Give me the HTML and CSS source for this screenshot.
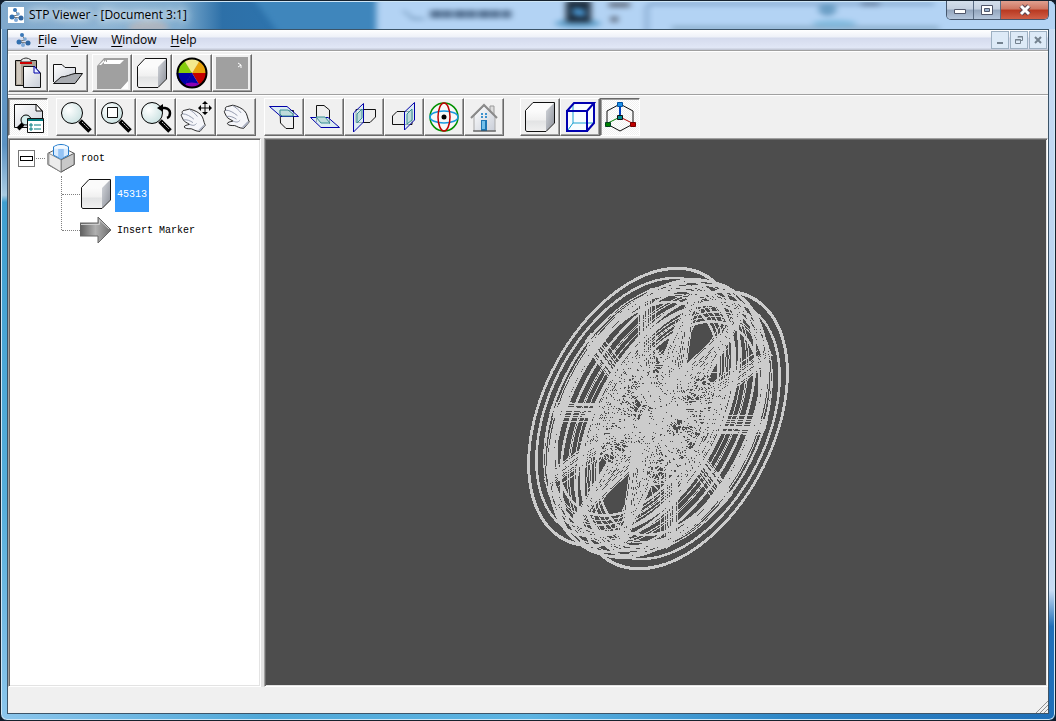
FILE: index.html
```html
<!DOCTYPE html>
<html lang="en">
<head>
    <meta charset="UTF-8">
    <meta name="viewport" content="width=device-width, initial-scale=1.0">
    <title>STP Viewer</title>
    <link rel="stylesheet" href="styles.css">
</head>
<body>
    <!-- shared shapes -->
    <svg class="defs" aria-hidden="true">
        <defs>
            <linearGradient id="side" x1="0" y1="0" x2="1" y2="1">
                <stop offset="0" stop-color="#d5d8dd"/>
                <stop offset="1" stop-color="#8c9099"/>
            </linearGradient>
            <linearGradient id="face" x1="0" y1="0" x2="0" y2="1">
                <stop offset="0" stop-color="#fbfbfb"/>
                <stop offset="0.45" stop-color="#f0f0f0"/>
                <stop offset="0.5" stop-color="#e2e3e4"/>
                <stop offset="1" stop-color="#f0f0f0"/>
            </linearGradient>
            <linearGradient id="paper" x1="0" y1="0" x2="1" y2="1">
                <stop offset="0" stop-color="#ffffff"/>
                <stop offset="1" stop-color="#c9ced8"/>
            </linearGradient>
            <radialGradient id="glass" cx="0.35" cy="0.35" r="0.8">
                <stop offset="0" stop-color="#ffffff"/>
                <stop offset="1" stop-color="#c4dede"/>
            </radialGradient>
            <linearGradient id="steel" x1="0" y1="0" x2="1" y2="0">
                <stop offset="0" stop-color="#5e5e5e"/>
                <stop offset="0.5" stop-color="#b0b0b0"/>
                <stop offset="1" stop-color="#6c6c6c"/>
            </linearGradient>
            <symbol id="cube" viewBox="0 0 32 32">
                <path d="M1.500 10 9 1.500H30.500V22L22 30.500H2.500L1.500 29Z" fill="#fbfbfb"/>
                <path d="M2 10H22V30H2Z" fill="url(#face)"/>
                <path d="M22 10 30 2V22L22 30Z" fill="url(#side)"/>
                <path d="M1.500 9.500 9 1.500H30.500V22L22 30.500H2.500L1.500 29Z" fill="none" stroke="#111"/>
            </symbol>
            <symbol id="lens" viewBox="0 0 32 32">
                <path d="M20 20 30 30" stroke="#000" stroke-width="5"/>
                <path d="M22 21 29 28" stroke="#c8c8c8" stroke-width="1" stroke-dasharray="2 1"/>
                <circle cx="12" cy="12" r="10.500" fill="url(#glass)" stroke="#000"/>
            </symbol>
            <symbol id="hand" viewBox="0 0 32 32">
                <path d="M6 5 12 3.500C18 5 22 7 25 10C28 13 28 18 30 22L24 29C19 29 17 27 14 26C10 26 7 26 6 24C6 22 9 22 12 21C9 19 6 18 5 16L3 12C2 10 3 9 4 9C3 7 4 5 6 5Z" fill="#f5f6fa" stroke="#111"/>
                <path d="M4 9C9 9 13 12 17 15M5 16C9 15 13 17 16 19M12 4C15 6 19 9 21 12M12 21C17 23 18 22 20 20" fill="none" stroke="#8c93a8"/>
                <path d="M23 28 29 22" stroke="#a9afc0" stroke-width="2"/>
            </symbol>
            <symbol id="atoms" viewBox="0 0 16 16">
                <path d="M7 3 10 8 5 9 9 13M4 10 12 11" fill="none" stroke="#777"/>
                <circle cx="7" cy="3" r="2" fill="#3a78b8"/>
                <circle cx="10" cy="7" r="1.800" fill="#7aa7d4"/>
                <circle cx="4" cy="10" r="2.500" fill="#3270b0"/>
                <circle cx="13" cy="11" r="2.500" fill="#2f65a0"/>
                <circle cx="8" cy="13" r="2" fill="#7fa9d8"/>
            </symbol>
        </defs>
    </svg>

    <div class="window">
        <header class="titlebar">
            <svg class="glass" viewBox="0 0 1056 29" preserveAspectRatio="none" aria-hidden="true">
                <g class="soft">
                    <path d="M250 -8H378V36H280Z" fill="#3f86bc"/>
                    <path d="M376 -8H1070V38H376Z" fill="#b3d3f4"/>
                    <ellipse cx="148" cy="28" rx="20" ry="9" fill="#c7b8b4" opacity="0.6"/>
                    <path d="M403 9 413 18M411 18H424" stroke="#7295b8" stroke-width="2"/>
                    <path d="M430 13H511" stroke="#334f70" stroke-width="9" stroke-dasharray="12 1 9 2" opacity="0.75"/>
                    <ellipse cx="578" cy="23" rx="23" ry="5" fill="#68a5cf"/>
                    <path d="M566 -2H591V22H566Z" fill="#1d2d3e"/>
                    <path d="M573 6 585 8V16L573 14Z" fill="#4791ca"/>
                    <path d="M609 0H630V6H609ZM611 15H618V22H611Z" fill="#667488"/>
                    <path d="M647 34V8Q647 2 653 2H935" fill="none" stroke="#7b9fc6" stroke-width="3"/>
                    <path d="M672 28H940" stroke="#86a8c4" stroke-width="4"/>
                    <ellipse cx="828" cy="8" rx="9" ry="7" fill="#6c9fc6"/>
                    <ellipse cx="835" cy="23" rx="22" ry="4" fill="#83bbdf"/>
                    <path d="M862 2H880" stroke="#50698c" stroke-width="5" opacity="0.7"/>
                </g>
            </svg>
            <svg class="app-icon" aria-hidden="true"><use href="#atoms"/></svg>
            <h1 class="title">STP Viewer - [Document 3:1]</h1>
            <div class="caption">
                <button class="cap min" aria-label="Minimize">
                    <svg width="16" height="12" viewBox="0 0 16 12"><path d="M2.500 5.500H13.500V9.500H2.500Z" fill="#fff" stroke="#50566a"/></svg>
                </button>
                <button class="cap max" aria-label="Maximize">
                    <svg width="14" height="12" viewBox="0 0 14 12"><path d="M1.500 1.500H12.500V10.500H1.500Z" fill="#fff" stroke="#50566a"/><path d="M4.500 4.500H9.500V7.500H4.500Z" fill="#9db4cf" stroke="#50566a"/></svg>
                </button>
                <button class="cap close" aria-label="Close">
                    <svg width="14" height="12" viewBox="0 0 14 12"><path d="M3 2 11 10M11 2 3 10" stroke="#5a4550" stroke-width="5"/><path d="M3 2 11 10M11 2 3 10" stroke="#fff" stroke-width="3"/></svg>
                </button>
            </div>
        </header>

        <div class="client">
            <nav class="menubar">
                <svg class="doc-icon" aria-hidden="true"><use href="#atoms"/></svg>
                <button class="menu"><u>F</u>ile</button>
                <button class="menu"><u>V</u>iew</button>
                <button class="menu"><u>W</u>indow</button>
                <button class="menu"><u>H</u>elp</button>
                <div class="mdi">
                    <button aria-label="Minimize document"><svg width="12" height="12"><path d="M3 9H9" stroke="#74828f" stroke-width="2"/></svg></button>
                    <button aria-label="Restore document"><svg width="12" height="12"><path d="M2.500 5.500H7.500V9.500H2.500ZM2 6H8M5 3.500V2.500H9.500V6.500H8M5 3H10" fill="none" stroke="#74828f"/></svg></button>
                    <button aria-label="Close document"><svg width="12" height="12"><path d="M3 3 9 9M9 3 3 9" stroke="#74828f" stroke-width="2"/></svg></button>
                </div>
            </nav>

            <div class="toolbar">
                <div class="group">
                    <button class="tool" aria-label="Paste">
                        <svg viewBox="0 0 32 32"><path d="M3.500 3.500H24.500V28.500H3.500Z" fill="#aaa195" stroke="#111"/><path d="M5 5H9V27H5Z" fill="#cfc8be"/><path d="M9 5V3Q14-1 19 3V5Z" fill="#e8e8e8" stroke="#333"/><path d="M8 6H20" stroke="#c00" stroke-width="2"/><path d="M11.500 9.500H22L28.500 16V30.500H11.500Z" fill="url(#paper)" stroke="#111"/><path d="M22 9V16H28Z" fill="#e8f0ff" stroke="#00a"/></svg>
                    </button>
                    <button class="tool" aria-label="Open">
                        <svg viewBox="0 0 32 32"><path d="M1.500 25V7.500H10L13 10.500H23.500V17" fill="url(#paper)" stroke="#111"/><path d="M1.500 26.500 9 20C14 20 19 17 23 16.500H30.500L23 26.500Z" fill="#a8abb0" stroke="#111"/></svg>
                    </button>
                </div>
                <div class="group after-small">
                    <button class="tool" disabled aria-label="New part">
                        <svg viewBox="0 0 32 32"><path d="M1 9 8 1H32V25L25 32H1Z" fill="#a0a0a0"/><path d="M3 8 8 3V7H24L28 3H11V5H10V3L5 8M32 24V32H25Z" fill="#fff"/></svg>
                    </button>
                    <button class="tool" aria-label="Solid">
                        <svg><use href="#cube"/></svg>
                    </button>
                    <button class="tool" aria-label="Colours">
                        <svg viewBox="0 0 32 32"><path d="M16 16 8 3Q16-1 24 3Z" fill="#f4e98c"/><path d="M16 16 24 3Q31 8 31 16Z" fill="#e7a20c"/><path d="M16 16H31Q31 24 24 29Z" fill="#c40000"/><path d="M16 16 24 29Q16 33 8 29Z" fill="#0000a8"/><path d="M7 27Q16 24 24 27L22 30Q16 32 9 30Z" fill="#8c00b4"/><path d="M16 16 8 29Q1 24 1 16Z" fill="#0000a8" stroke="#0000a8"/><path d="M16 16H1Q1 8 8 3Z" fill="#86cc0a"/><circle cx="16" cy="16" r="14.500" fill="none" stroke="#000" stroke-width="2"/></svg>
                    </button>
                    <button class="tool" disabled aria-label="Render">
                        <svg viewBox="0 0 32 32"><path d="M0 0H32V32H0Z" fill="#a0a0a0"/><path d="M22 6 25 8 22 10M25 8V11" fill="none" stroke="#fff"/></svg>
                    </button>
                </div>
            </div>

            <div class="toolbar">
                <div class="group">
                    <button class="tool pressed" aria-label="Model tree">
                        <svg viewBox="0 0 32 32"><path d="M2.500 3.500H24L30.500 10V26.500H2.500Z" fill="url(#paper)" stroke="#111"/><path d="M24 3V10H30Z" fill="#fff" stroke="#111"/><path d="M6 28 11 23" stroke="#000" stroke-width="4"/><circle cx="14" cy="19" r="5" fill="#d6eeee" stroke="#000"/><path d="M15.500 17.500H31.500V31.500H15.500Z" fill="#fff" stroke="#111"/><path d="M16 19H31" stroke="#007c80" stroke-width="2"/><path d="M18 23H20V25H18ZM18 27H20V29H18ZM22 24H29M22 28H29" fill="none" stroke="#007c80"/></svg>
                    </button>
                </div>
                <div class="group after">
                    <button class="tool" aria-label="Zoom"><svg><use href="#lens"/></svg></button>
                    <button class="tool" aria-label="Zoom window">
                        <svg viewBox="0 0 32 32"><use href="#lens"/><path d="M7.500 6.500H17.500V16.500H7.500Z" fill="#fff" stroke="#111" stroke-width="1"/></svg>
                    </button>
                    <button class="tool" aria-label="Previous zoom">
                        <svg viewBox="0 0 32 32"><use href="#lens"/><path d="M21 7H25Q30 8 30 12Q30 16 27 17" fill="none" stroke="#000" stroke-width="2.500"/><path d="M17 7 23 3V11Z"/></svg>
                    </button>
                    <button class="tool" aria-label="Pan">
                        <svg viewBox="0 0 32 32"><use href="#hand" x="-1" y="5" width="28" height="28"/><path d="M25 1V13M19 7H31" stroke="#000" stroke-width="1"/><path d="M25 0 28 3H22ZM25 14 28 11H22ZM18 7 21 4V10ZM32 7 29 4V10Z"/></svg>
                    </button>
                    <button class="tool" aria-label="Rotate"><svg viewBox="0 0 32 32"><use href="#hand" x="2" y="1" width="29" height="29"/></svg></button>
                </div>
                <div class="group after">
                    <button class="tool" aria-label="Top view">
                        <svg viewBox="0 0 32 32"><path d="M12 9.500H25.500V27.500H18L12.500 22Z" fill="#f0f0f0" stroke="#111"/><path d="M1.500 5.500H19L30.500 15.500H13Z" fill="#d3e9f2" fill-opacity="0.7" stroke="#0000a8"/><path d="M12 13V9H20L25 13V15H14Z" fill="#bfdcdb" stroke="#3a9094"/></svg>
                    </button>
                    <button class="tool" aria-label="Bottom view">
                        <svg viewBox="0 0 32 32"><path d="M8.500 21V4.500H16L21.500 9V23" fill="#eee" stroke="#111"/><path d="M2.500 16.500H20L31.500 26.500H13Z" fill="#d3e9f2" fill-opacity="0.7" stroke="#0000a8"/><path d="M8 16H17L22 22H13Z" fill="#bfdcdb" stroke="#3a9094"/></svg>
                    </button>
                    <button class="tool" aria-label="Left view">
                        <svg viewBox="0 0 32 32"><path d="M8 8.500H27.500V16L22 21.500H8Z" fill="#eee" stroke="#111"/><path d="M5.500 12 15.500 2.500V21L5.500 31Z" fill="#d3e9f2" fill-opacity="0.7" stroke="#0000a8"/><path d="M9 13 14 8V17L9 22Z" fill="#bfdcdb" stroke="#3a9094"/></svg>
                    </button>
                    <button class="tool" aria-label="Right view">
                        <svg viewBox="0 0 32 32"><path d="M24 10.500H9L4.500 15V23.500H24Z" fill="#eee" stroke="#111"/><path d="M16.500 11 26.500 1.500V19L16.500 29Z" fill="#d3e9f2" fill-opacity="0.7" stroke="#0000a8"/><path d="M19 13 24 8V19L19 23Z" fill="#bfdcdb" stroke="#3a9094"/></svg>
                    </button>
                    <button class="tool" aria-label="Orbit">
                        <svg viewBox="0 0 32 32"><circle cx="16" cy="16" r="14" fill="#f7f7f7" stroke="#009000" stroke-width="1.500"/><ellipse cx="16" cy="16" rx="14" ry="6" fill="none" stroke="#1898e0" stroke-width="1.500"/><ellipse cx="16" cy="16" rx="6" ry="14" fill="none" stroke="#c00000" stroke-width="1.500"/><circle cx="16" cy="16" r="2.500"/></svg>
                    </button>
                    <button class="tool" aria-label="Home view">
                        <svg viewBox="0 0 32 32"><path d="M22 5H26V14H22Z" fill="#ddd" stroke="#999"/><path d="M6 15 16 5 27 15V30H6Z" fill="url(#paper)" stroke="#aaa"/><path d="M3 17 16 4 29 17" fill="none" stroke="#8a8a8a" stroke-width="2"/><path d="M13 12H15V14H13ZM17 12H19V14H17ZM13 15H15V17H13ZM17 15H19V17H17Z" fill="#3d92ce"/><path d="M13 19H19V30H13Z" fill="#1d77b5"/><path d="M14 20H17V28H14Z" fill="#73c0ea"/><path d="M5 30H28" stroke="#444"/></svg>
                    </button>
                </div>
                <div class="group after-wide">
                    <button class="tool" aria-label="Shaded"><svg><use href="#cube"/></svg></button>
                    <button class="tool" aria-label="Wireframe">
                        <svg viewBox="0 0 32 32"><path d="M3 10 10 2H30V22L23 30H3Z" fill="#f8fcff"/><path d="M9 3V22H29M9 22 4 29" fill="none" stroke="#18a0d0"/><path d="M3 10H23V30H3ZM3 10 10 2H30L23 10M30 2V22L23 30" fill="none" stroke="#0000b0" stroke-width="2"/></svg>
                    </button>
                    <button class="tool pressed" aria-label="Axes">
                        <svg viewBox="0 0 32 32"><path d="M16 3 29 10V23L16 30 3 23V10Z" fill="none" stroke="#111"/><path d="M16 4V16" stroke="#0040c0" stroke-width="2"/><path d="M16 16 28 22" stroke="#b00000"/><path d="M16 16 4 22" stroke="#008000"/><path d="M13.500 1.500H18.500V5.500H13.500Z" fill="#1d90e8" stroke="#0050a0"/><path d="M13.500 14.500H18.500V18.500H13.500Z" fill="#008c90" stroke="#111"/><path d="M1.500 21.500H6.500V25.500H1.500Z" fill="#008000" stroke="#042"/><path d="M26.500 21.500H31.500V25.500H26.500Z" fill="#c00000" stroke="#700"/></svg>
                    </button>
                </div>
            </div>

            <main class="work">
                <aside class="tree">
                    <div class="row root">
                        <button class="expander" aria-label="Collapse root"></button>
                        <span class="dots"></span>
                        <svg class="node-icon" viewBox="0 0 32 32"><path d="M2 11 16 4 30 11V23L16 31 2 23Z" fill="#f4f4f4" stroke="#555"/><path d="M16 18 30 11V23L16 31Z" fill="#c8c8c8" stroke="#555"/><path d="M3 11 16 18V31L3 23Z" fill="#ececec" stroke="#888"/><path d="M8 4Q16-1 24 4V13L16 17 8 13Z" fill="#d8ebff" stroke="#1573c9"/><path d="M13 6H19V15L16 17 13 15Z" fill="#94c3f4"/><path d="M9 4Q16 1 23 4V6H9Z" fill="#f5faff"/></svg>
                        <span class="label">root</span>
                    </div>
                    <div class="branch">
                        <div class="row">
                            <span class="dots"></span>
                            <svg class="node-icon"><use href="#cube"/></svg>
                            <span class="label selected">45313</span>
                        </div>
                        <div class="row">
                            <span class="dots"></span>
                            <svg class="node-icon" viewBox="0 0 32 32"><path d="M0 9H18V3L31 16 18 29V22H0Z" fill="url(#steel)" stroke="#666"/><path d="M1 10.500H19.500V6L29 15" fill="none" stroke="#ccc"/></svg>
                            <span class="label">Insert Marker</span>
                        </div>
                    </div>
                </aside>
                <section class="viewport" aria-label="Model view">
                    <svg id="model" viewBox="266 140 780 545"></svg>
                </section>
            </main>

            <footer class="statusbar">
                <svg width="12" height="12" aria-hidden="true"><path d="M0 12 12 0M4 12 12 4M8 12 12 8" stroke="#8f8f8f"/></svg>
            </footer>
        </div>
    </div>
    <script src="wheel.js"></script>
</body>
</html>
```
FILE: styles.css
```css
* {
    box-sizing: border-box;
}
body {
    margin: 0;
    height: 100vh;
    overflow: hidden;
    background: #101c2c;
    font-family: "Open Sans", "Noto Sans", sans-serif;
    font-size: 12px;
    color: #000;
}
button {
    margin: 0;
    padding: 0;
    border: 0;
    background: none;
    font: inherit;
    color: inherit;
}
svg {
    display: block;
}
.defs {
    position: absolute;
    width: 0;
    height: 0;
}

/* window frame */
.window {
    position: relative;
    display: flex;
    flex-direction: column;
    height: 100%;
    padding: 0 6px 6px;
    border: 1px solid #16222e;
    border-radius: 7px;
    overflow: hidden;
    background:
        linear-gradient(to right, #8cc6ec, #4fa8d8 25%, #5cb4e2 50%, #2d86c6 75%, #1f6fb8) bottom / 100% 7px no-repeat,
        linear-gradient(#6e9cc8, #5b92c2 20%, #a9cbe2 27%, #3f9fd0 28%, #55aedb 70%, #8cc6ec) left / 7px 100% no-repeat,
        linear-gradient(#c8dcf4, #b4d0ee 60%, #c8dcf4 82%, #1f6fb8 87%) right / 7px 100% no-repeat,
        #6e9cc8;
    box-shadow: inset 0 0 0 1px #cfe6f6;
}
.titlebar {
    display: flex;
    align-items: center;
    height: 28px;
    flex: none;
}
.glass {
    position: absolute;
    left: 0;
    top: 0;
    width: 100%;
    height: 28px;
    background: linear-gradient(to right, #7fa8cc, #8db4d4 10%, #7eaccf 17%, #2d70a8 21%, #2d74ae 28%, #4488bf 36%);
    border-top: 1px solid #cfe6f6;
}
.soft {
    filter: blur(3px);
}
.app-icon {
    position: relative;
    width: 16px;
    height: 16px;
    margin-left: 1px;
    background: #fff;
}
.title {
    position: relative;
    margin: 0 0 0 5px;
    font-size: 12px;
    line-height: 28px;
    font-weight: 400;
    text-shadow: 0 0 6px #fff, 0 0 10px #dceaf6, 0 0 14px #dceaf6;
}
.caption {
    position: relative;
    display: flex;
    align-self: flex-start;
    margin-left: auto;
    border: 1px solid #45566c;
    border-top: 0;
    border-radius: 0 0 5px 5px;
    overflow: hidden;
}
.cap {
    display: flex;
    align-items: center;
    justify-content: center;
    width: 27px;
    height: 18px;
    border-right: 1px solid #5a6c84;
    background: linear-gradient(#d4dfec, #c4d0e0 45%, #93a5bd 50%, #b4c6dc);
}
.cap.close {
    width: 47px;
    border-right: 0;
    background: linear-gradient(#e0a090, #cf7560 45%, #b83820 50%, #d06048);
}

/* client area */
.client {
    position: relative;
    display: flex;
    flex-direction: column;
    flex: 1;
    min-height: 0;
    border: 1px solid #3c5468;
    background: #f0f0f0;
}
.menubar {
    display: flex;
    align-items: center;
    height: 20px;
    flex: none;
    padding: 0 1px 0 7px;
    background: linear-gradient(#ffffff, #eef1f8 35%, #d5dbed 40%, #e1e7f6 90%, #c5cad8 95%);
}
.doc-icon {
    width: 16px;
    height: 16px;
}
.menu {
    padding: 0 7px;
    line-height: 20px;
}
.menu u {
    text-underline-offset: 2px;
}
.mdi {
    display: flex;
    gap: 1px;
    margin-left: auto;
}
.mdi button {
    display: flex;
    align-items: center;
    justify-content: center;
    width: 18px;
    height: 18px;
    border: 1px solid #9db0c2;
    background: #ddeaf7;
}
.toolbar {
    display: flex;
    flex: none;
    padding: 3px 0 2px;
    border-top: 1px solid #a0a0a0;
    box-shadow: inset 0 1px #fff;
}
.group {
    display: flex;
}
.after-small {
    margin-left: 4px;
}
.after {
    margin-left: 8px;
}
.after-wide {
    margin-left: 16px;
}
.tool {
    display: flex;
    align-items: center;
    justify-content: center;
    width: 40px;
    height: 38px;
    border: 1px solid;
    border-color: #fff #696969 #696969 #fff;
    box-shadow: inset -1px -1px #a0a0a0;
}
.tool svg {
    width: 32px;
    height: 32px;
    overflow: visible;
}
.tool.pressed {
    border-color: #696969 #fff #fff #696969;
    box-shadow: inset 1px 1px #a0a0a0;
    background: repeating-conic-gradient(#fff 0 25%, #f0f0f0 0 50%) 0 0 / 2px 2px;
}

/* tree and model view */
.work {
    display: grid;
    grid-template-columns: minmax(180px, 253px) 1fr;
    gap: 3px;
    flex: 1;
    min-height: 0;
    background: #e3e3e3;
}
.tree,
.viewport {
    min-width: 0;
    min-height: 0;
    border: 1px solid;
    border-color: #a0a0a0 #fff #fff #a0a0a0;
    box-shadow: inset 1px 1px #696969, inset -1px -1px #e3e3e3;
}
.tree {
    padding: 1px 8px;
    background: #fff;
    font-family: "Liberation Mono", monospace;
    font-size: 10px;
}
.row {
    display: flex;
    align-items: center;
    height: 36px;
}
.expander {
    display: flex;
    align-items: center;
    justify-content: center;
    width: 17px;
    height: 17px;
    margin-left: 1px;
    border: 1px solid #777;
}
.expander::before {
    content: "";
    width: 11px;
    height: 3px;
    border: 1px solid #000;
}
.dots {
    width: 9px;
    margin: 0 1px;
    border-top: 1px dotted #808080;
}
.node-icon {
    flex: none;
    width: 32px;
    height: 32px;
}
.root .node-icon {
    width: 30px;
    height: 30px;
}
.label {
    padding: 2px 2px 0;
    margin-left: 3px;
    line-height: 34px;
    white-space: nowrap;
}
.selected {
    background: #3399ff;
    color: #fff;
}
.branch {
    position: relative;
    margin-left: 44px;
}
.branch::before {
    content: "";
    position: absolute;
    left: 0;
    top: 0;
    height: 54px;
    border-left: 1px dotted #808080;
}
.branch .dots {
    width: 18px;
    margin: 0 0 0 1px;
}
.viewport {
    background: #4d4d4d;
}
#model {
    width: 100%;
    height: 100%;
    fill: none;
    stroke: #cccccc;
    shape-rendering: crispEdges;
}
.statusbar {
    display: flex;
    align-items: flex-end;
    justify-content: flex-end;
    flex: none;
    height: 26px;
}
```
FILE: wheel.js
```javascript
// wireframe of the wheel: r and angle in the wheel plane, z along the axle (-1..1)
const center = { x: 658, y: 418.5 };
const u = { x: 70, y: -134 };
const v = { x: 80, y: 41 };
const axle = { x: 24, y: 11.5 };

let seed = 45313;
function rand() {
    seed = (seed * 16807) % 2147483647;
    return seed / 2147483647;
}
function between(a, b) {
    return a + (b - a) * rand();
}

function point(r, deg, z) {
    const a = deg * Math.PI / 180;
    const c = r * Math.cos(a);
    const s = r * Math.sin(a);
    const x = center.x + u.x * c + v.x * s + axle.x * z;
    const y = center.y + u.y * c + v.y * s + axle.y * z;
    return x.toFixed(1) + " " + y.toFixed(1);
}

let thin = "";
let thick = "";
function line(p, q) {
    thin += "M" + p + "L" + q;
}
function ring(r, z) {
    let d = "";
    for (let a = 0; a < 360; a += 4) {
        d += (a ? "L" : "M") + point(r, a, z);
    }
    return d + "Z";
}

// rim
thick += ring(0.98, 0);
for (const side of [-1, 1]) {
    thick += ring(0.99, side);
    thin += ring(0.98, side);
    thick += ring(0.92, side * 0.98);
    thick += ring(0.97, side * 0.25);
    thin += ring(0.94, side * 0.4);
    for (const [r, z] of [[0.89, 0.8], [0.88, 0.7], [0.87, 0.9], [0.9, 0.5], [0.91, 0.35], [0.84, 0.95], [0.82, 0.8], [0.8, 0.9]]) {
        thin += ring(r, side * z);
    }
    thick += ring(0.86, side * 0.6);
    thick += ring(0.76, side * 0.85);
}

// spokes
for (const side of [-1, 1]) {
    for (let k = 0; k < 10; k++) {
        const a = k * 36;
        for (let i = -3; i <= 3; i++) {
            line(point(0.4, a + i * 2.5, side * 0.75), point(0.84, a + i * 1.2, side * 0.9));
        }
        for (let i = -3; i <= 3; i += 2) {
            line(point(0.36, a + i * 3, side * 0.5), point(0.82, a + i * 1.5, side * 0.7));
        }
        thick += "M" + point(0.4, a, side * 0.9) + "L" + point(0.84, a, side * 0.95);
        for (let i = 0; i < 14; i++) {
            const r = between(0.76, 0.88);
            line(point(r, a - between(1, 4), side * 0.9), point(r + 0.03, a + between(1, 4), side * 0.8));
        }
    }
}

// hub and bolt holes
for (const side of [-1, 1]) {
    for (let i = 0; i < 7; i++) {
        thin += ring(0.08 + i * 0.05, side * between(0.3, 0.9));
    }
    for (let k = 0; k < 10; k++) {
        for (let i = 0; i < 14; i++) {
            const a = k * 36 + between(-9, 9);
            line(point(between(0.2, 0.42), a, side * between(0.3, 1)), point(between(0.35, 0.54), a + between(-5, 5), side * between(0.3, 1)));
        }
    }
    for (let i = 0; i < 950; i++) {
        const a = between(0, 360);
        const r = between(0.08, 0.43);
        line(point(r, a, side * between(0.4, 1)), point(r + between(-0.05, 0.05), a + between(-12, 12), side * between(0.4, 1)));
    }
}

document.getElementById("model").innerHTML =
    '<path stroke-width="1" d="' + thin + '"/><path stroke-width="2.5" d="' + thick + '"/>';
```
